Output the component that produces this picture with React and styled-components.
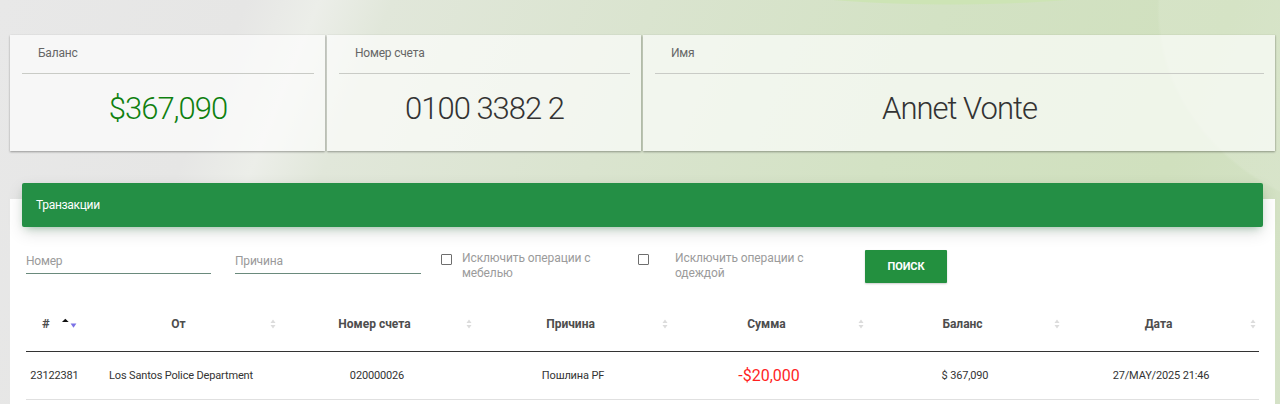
import React from "react";
import styled, { createGlobalStyle } from "styled-components";

const GlobalStyle = createGlobalStyle`
  html, body {
    margin: 0;
    padding: 0;
  }
  body {
    font-family: Roboto, "Noto Sans", "Liberation Sans", sans-serif;
    background-color: #e3e6df;
    background-image:
      radial-gradient(ellipse 300px 50px at 950px -40px, #cde4b5 0%, #cde4b5 88%, rgba(205,228,181,0) 90%),
      radial-gradient(ellipse 300px 260px at 1400px 10px, rgba(255,255,255,0.11) 0%, rgba(255,255,255,0.11) 80%, rgba(255,255,255,0) 81%),
      linear-gradient(112deg, #e8e8e8 0%, #e6e6e5 17%, #eceee9 22%, #e1e7da 27%, #dae4cf 45%, #d3e2c4 65%, #d0e0be 85%, #d5e2c8 100%);
    background-repeat: no-repeat;
    min-height: 100vh;
  }
`;

const Page = styled.div`
  padding: 35px 5px 0 10px;
`;

const CardsRow = styled.div`
  display: grid;
  grid-template-columns: 315px 314px 1fr;
  gap: 2px;
`;

const InfoCard = styled.div`
  background: rgba(255, 255, 255, 0.66);
  box-shadow: 0 1px 2px rgba(0, 0, 0, 0.35), 1px 0 1px rgba(0, 0, 0, 0.05);
  padding: 0 11px 24px 12px;
`;

const CardLabel = styled.div`
  padding: 11px 16px 13px;
  border-bottom: 1px solid #c9cbc6;
  font-size: 12px;
  line-height: 14px;
  color: #666;
  letter-spacing: -0.2px;
`;

const CardValue = styled.div`
  padding-top: 17px;
  text-align: center;
  font-size: 31px;
  line-height: 36px;
  font-weight: 300;
  letter-spacing: -1px;
  color: ${(p) => p.$color || "#333"};
`;

const Panel = styled.section`
  display: flow-root;
  margin-top: 48px;
  background: #fff;
  padding-bottom: 30px;
`;

const PanelHeader = styled.div`
  margin: -16px 12px 0;
  height: 44px;
  display: flex;
  align-items: center;
  padding-left: 14px;
  background: #248f45;
  color: #fff;
  font-size: 12px;
  letter-spacing: -0.3px;
  border-radius: 2px;
  box-shadow: 0 6px 16px rgba(0, 0, 0, 0.12), 0 4px 8px -4px rgba(36, 143, 69, 0.45);
`;

const Filters = styled.div`
  display: flex;
  align-items: flex-start;
  margin-top: 23px;
  padding-left: 16px;
`;

const TextInput = styled.input`
  box-sizing: border-box;
  width: ${(p) => p.$width}px;
  margin-left: ${(p) => p.$gap || 0}px;
  height: 24px;
  padding: 0 0 2px;
  border: none;
  border-bottom: 1px solid #6a8a7c;
  background: transparent;
  font-family: inherit;
  font-size: 12px;
  color: #333;
  outline: none;
  letter-spacing: -0.2px;
  &::placeholder {
    color: #9a9a9a;
  }
`;

const CheckGroup = styled.label`
  display: flex;
  align-items: flex-start;
  margin-left: ${(p) => p.$gap}px;
  gap: ${(p) => p.$inner}px;
`;

const Box = styled.span`
  box-sizing: border-box;
  width: 11px;
  height: 11px;
  margin-top: 4px;
  border: 1px solid #6e6e6e;
  border-radius: 1px;
  background: #fff;
  flex: none;
`;

const CheckText = styled.span`
  width: 142px;
  padding-top: 1px;
  font-size: 12px;
  line-height: 15px;
  color: #9b9b9b;
  letter-spacing: -0.1px;
`;

const SearchButton = styled.button`
  margin-left: ${(p) => p.$gap}px;
  width: 82px;
  height: 33px;
  border: none;
  border-radius: 1px;
  background: #23903f;
  color: #fff;
  font-family: inherit;
  font-weight: 700;
  font-size: 11px;
  letter-spacing: -0.1px;
  box-shadow: 0 1px 2px rgba(0, 0, 0, 0.2);
`;

const Table = styled.table`
  margin: 17px 0 0 16px;
  width: 1233px;
  border-collapse: collapse;
  table-layout: fixed;
`;

const Th = styled.th`
  padding: 16px 5px 19px 0;
  border-bottom: 1px solid #333;
  font-size: 12px;
  line-height: 16px;
  font-weight: 700;
  color: #4d4d4d;
`;

const ThInner = styled.div`
  display: grid;
  grid-template-columns: 1fr auto 1fr;
  align-items: center;
`;

const ThFirst = styled.div`
  display: flex;
  align-items: center;
  gap: 11px;
  padding-left: 16px;
  font-size: 13px;
`;

const IconCell = styled.span`
  justify-self: end;
  display: flex;
  margin-right: -2px;
`;

const Td = styled.td`
  padding: 15px 0;
  border-bottom: 1px solid #e0e0e0;
  text-align: center;
  font-size: ${(p) => (p.$big ? "16px" : "11px")};
  line-height: 17px;
  letter-spacing: ${(p) => (p.$big ? "0" : "-0.15px")};
  color: ${(p) => p.$color || "#333"};
`;

const SortBoth = () => (
  <svg width="6" height="10" viewBox="0 0 6 10">
    <path d="M3 0.5 L5.5 4 L0.5 4 Z" fill="#dcdcdc" />
    <path d="M3 9.5 L5.5 6 L0.5 6 Z" fill="#dcdcdc" />
  </svg>
);

const SortAsc = () => (
  <svg width="18" height="12" viewBox="0 0 18 12">
    <path d="M4.5 0.5 L8 4 L1 4 Z" fill="#111" />
    <path d="M10 5.5 L16 5.5 L13 10 Z" fill="#7b72e6" />
  </svg>
);

const columns = ["От", "Номер счета", "Причина", "Сумма", "Баланс", "Дата"];

export default function App() {
  return (
    <>
      <GlobalStyle />
      <Page>
        <CardsRow>
          <InfoCard>
            <CardLabel>Баланс</CardLabel>
            <CardValue $color="#0f800f">$367,090</CardValue>
          </InfoCard>
          <InfoCard>
            <CardLabel>Номер счета</CardLabel>
            <CardValue>0100 3382 2</CardValue>
          </InfoCard>
          <InfoCard>
            <CardLabel>Имя</CardLabel>
            <CardValue>Annet Vonte</CardValue>
          </InfoCard>
        </CardsRow>

        <Panel>
          <PanelHeader>Транзакции</PanelHeader>
          <Filters>
            <TextInput $width={185} placeholder="Номер" />
            <TextInput $width={186} $gap={24} placeholder="Причина" />
            <CheckGroup $gap={20} $inner={10}>
              <Box />
              <CheckText>Исключить операции с мебелью</CheckText>
            </CheckGroup>
            <CheckGroup $gap={34} $inner={26}>
              <Box />
              <CheckText>Исключить операции с одеждой</CheckText>
            </CheckGroup>
            <SearchButton $gap={48}>ПОИСК</SearchButton>
          </Filters>

          <Table>
            <colgroup>
              <col style={{ width: 57 }} />
              {columns.map((c) => (
                <col key={c} style={{ width: 196 }} />
              ))}
            </colgroup>
            <thead>
              <tr>
                <Th>
                  <ThFirst>
                    <span>#</span>
                    <SortAsc />
                  </ThFirst>
                </Th>
                {columns.map((c) => (
                  <Th key={c}>
                    <ThInner>
                      <span />
                      <span>{c}</span>
                      <IconCell>
                        <SortBoth />
                      </IconCell>
                    </ThInner>
                  </Th>
                ))}
              </tr>
            </thead>
            <tbody>
              <tr>
                <Td>23122381</Td>
                <Td>Los Santos Police Department</Td>
                <Td>020000026</Td>
                <Td>Пошлина PF</Td>
                <Td $big $color="#ff1f1f">-$20,000</Td>
                <Td>$ 367,090</Td>
                <Td>27/MAY/2025 21:46</Td>
              </tr>
            </tbody>
          </Table>
        </Panel>
      </Page>
    </>
  );
}
